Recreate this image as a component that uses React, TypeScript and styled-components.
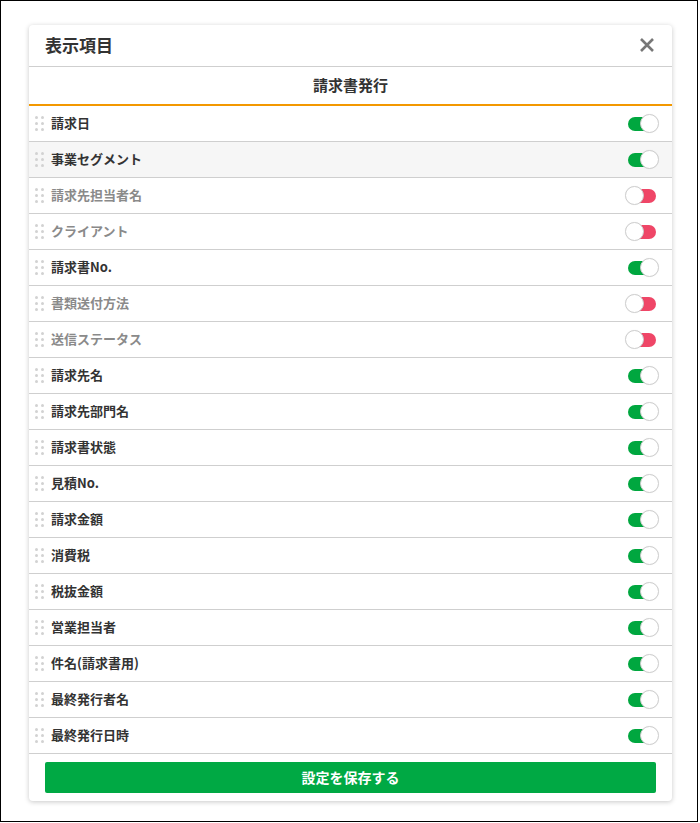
import React from "react";
import styled, { createGlobalStyle } from "styled-components";

const GlobalStyle = createGlobalStyle`
  html, body { margin: 0; padding: 0; background: #fff; }
  body { font-family: "Noto Sans CJK JP", "Noto Sans", sans-serif; color: #333; }
  * { box-sizing: border-box; }
`;

const Frame = styled.div`
  width: 698px;
  height: 822px;
  border: 1px solid #000;
  padding: 24px 0 0 28px;
`;

const Card = styled.div`
  width: 643px;
  background: #fff;
  border-radius: 4px;
  box-shadow: 0 1px 5px rgba(0, 0, 0, 0.22);
  display: flex;
  flex-direction: column;
`;

const Header = styled.div`
  height: 42px;
  display: flex;
  align-items: center;
  justify-content: space-between;
  padding: 0 14px 0 16px;
  border-bottom: 1px solid #cfcfcf;
`;

const Title = styled.h2`
  margin: 0 0 3px;
  font-size: 17px;
  font-weight: 700;
  color: #333;
`;

const CloseButton = styled.button`
  border: 0;
  background: transparent;
  padding: 0;
  width: 22px;
  height: 22px;
  display: flex;
  align-items: center;
  justify-content: center;
  cursor: pointer;
  margin-top: -2px;
`;

const Tab = styled.div`
  height: 39px;
  display: flex;
  align-items: center;
  justify-content: center;
  border-bottom: 2px solid #f39800;
  font-size: 15px;
  font-weight: 700;
  color: #333;
  padding-bottom: 3px;
`;

const List = styled.div`
  display: flex;
  flex-direction: column;
`;

const Row = styled.div<{ $hover?: boolean }>`
  height: 36px;
  display: flex;
  align-items: center;
  padding: 0 14px 0 6px;
  border-bottom: 1px solid #cfcfcf;
  background: ${(p) => (p.$hover ? "#f6f6f6" : "#fff")};
`;

const Grip = styled.div`
  display: grid;
  grid-template-columns: repeat(2, 3px);
  grid-template-rows: repeat(3, 3px);
  gap: 3px;
  margin-right: 7px;
  span {
    width: 3px;
    height: 3px;
    border-radius: 50%;
    background: #d2d2d2;
  }
`;

const Label = styled.span<{ $on: boolean }>`
  flex: 1;
  font-size: 13px;
  font-weight: 700;
  margin-bottom: 3px;
  color: ${(p) => (p.$on ? "#333" : "#8a8a8a")};
`;

const Toggle = styled.div<{ $on: boolean }>`
  position: relative;
  width: 28px;
  height: 14px;
  border-radius: 7px;
  background: ${(p) => (p.$on ? "#00a73f" : "#ef4667")};
  margin-right: 2px;
`;

const Knob = styled.span<{ $on: boolean }>`
  position: absolute;
  top: -3px;
  left: ${(p) => (p.$on ? "12px" : "-3px")};
  width: 19px;
  height: 19px;
  border-radius: 50%;
  background: #fff;
  border: 1px solid #cfcfcf;
  box-shadow: 0 0 1px rgba(0, 0, 0, 0.1);
`;

const Footer = styled.div`
  padding: 8px 16px 8px;
`;

const SaveButton = styled.button`
  width: 100%;
  height: 31px;
  border: 0;
  border-radius: 2px;
  background: #00a944;
  color: #fff;
  font-family: "Noto Sans CJK JP", "Noto Sans", sans-serif;
  font-size: 14px;
  font-weight: 700;
  padding-bottom: 3px;
  cursor: pointer;
`;

const items: { label: string; on: boolean }[] = [
  { label: "請求日", on: true },
  { label: "事業セグメント", on: true },
  { label: "請求先担当者名", on: false },
  { label: "クライアント", on: false },
  { label: "請求書No.", on: true },
  { label: "書類送付方法", on: false },
  { label: "送信ステータス", on: false },
  { label: "請求先名", on: true },
  { label: "請求先部門名", on: true },
  { label: "請求書状態", on: true },
  { label: "見積No.", on: true },
  { label: "請求金額", on: true },
  { label: "消費税", on: true },
  { label: "税抜金額", on: true },
  { label: "営業担当者", on: true },
  { label: "件名(請求書用)", on: true },
  { label: "最終発行者名", on: true },
  { label: "最終発行日時", on: true },
];

export default function App() {
  return (
    <>
      <GlobalStyle />
      <Frame>
        <Card>
          <Header>
            <Title>表示項目</Title>
            <CloseButton aria-label="close">
              <svg width="16" height="16" viewBox="0 0 16 16">
                <path d="M2 2 L14 14 M14 2 L2 14" stroke="#777" strokeWidth="2.6" strokeLinecap="butt" />
              </svg>
            </CloseButton>
          </Header>
          <Tab>請求書発行</Tab>
          <List>
            {items.map((it, i) => (
              <Row key={it.label} $hover={i === 1}>
                <Grip>
                  <span /><span /><span /><span /><span /><span />
                </Grip>
                <Label $on={it.on}>{it.label}</Label>
                <Toggle $on={it.on}>
                  <Knob $on={it.on} />
                </Toggle>
              </Row>
            ))}
          </List>
          <Footer>
            <SaveButton>設定を保存する</SaveButton>
          </Footer>
        </Card>
      </Frame>
    </>
  );
}
